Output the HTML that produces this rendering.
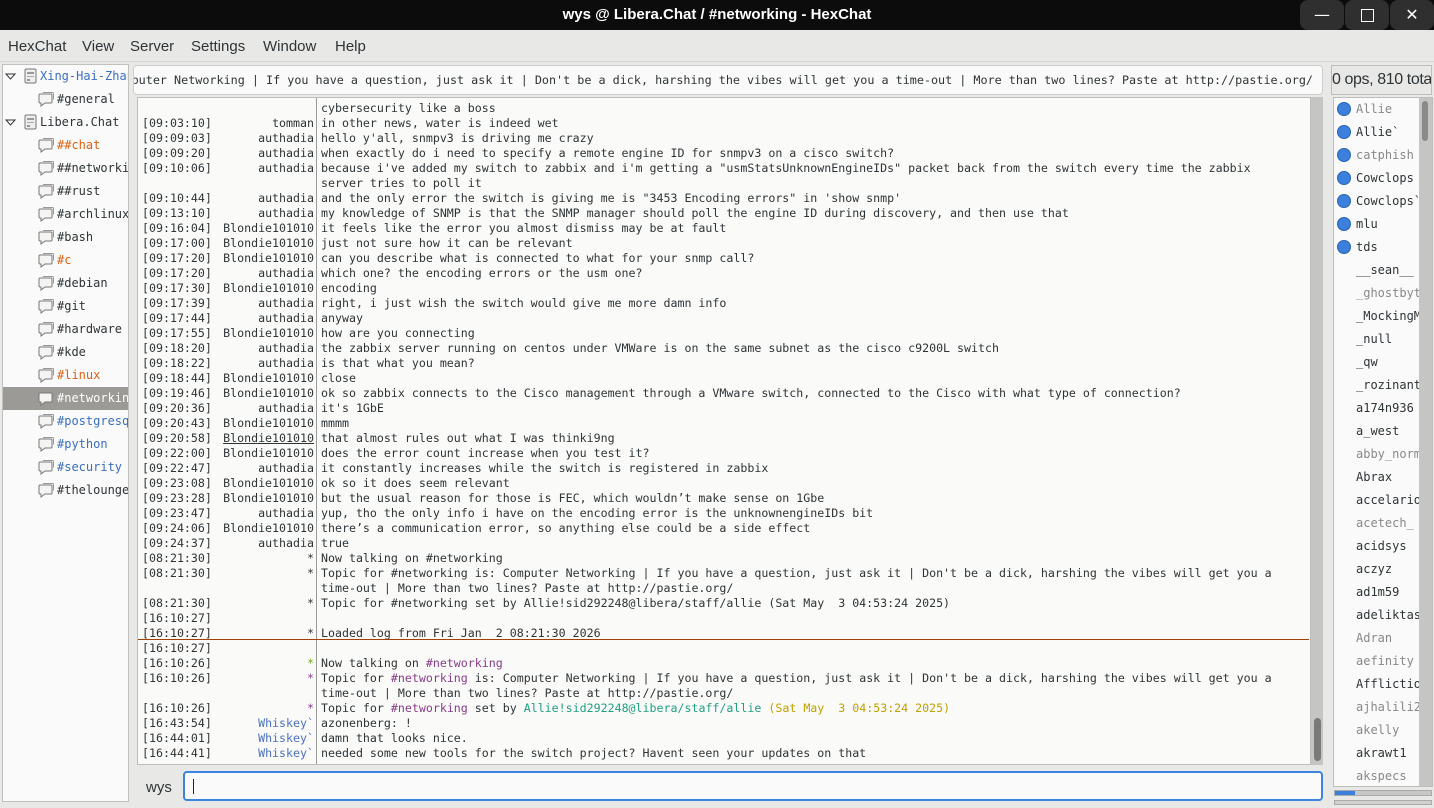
<!DOCTYPE html>
<html><head><meta charset="utf-8">
<style>
*{box-sizing:border-box;margin:0;padding:0}
body{width:1434px;height:808px;overflow:hidden;background:#e8e8e7;font-family:"DejaVu Sans","Liberation Sans",sans-serif;color:#2e3436;position:relative}
.abs{position:absolute}
#title{left:0;top:0;width:1434px;height:30px;background:#0c0c0c;color:#fff;font-weight:bold;font-size:15px;text-align:center;line-height:30px;font-family:"Liberation Sans",sans-serif}
.wb{top:0;width:44px;height:30px;background:#2f2f2f;border-radius:8px;color:#fff;text-align:center;line-height:30px;font-size:16px}
#menu{left:0;top:30px;width:1434px;height:32px;background:#e8e8e7;font-size:15px;border-bottom:1px solid #d6d6d4;font-family:"Liberation Sans",sans-serif}
#menu span{position:absolute;top:8px;line-height:18px}
.mono{font-family:"DejaVu Sans Mono","Liberation Mono",monospace}
#tree{left:2px;top:64px;width:127px;height:738px;background:#fafafa;border:1px solid #c0c0bd;overflow:hidden;font-size:12px}
.ti{position:absolute;height:23px;line-height:23px;white-space:nowrap;left:0;width:127px}
.ti svg{position:absolute}
#topic{left:133px;top:65px;width:1190px;height:30px;background:#fafafa;border:1px solid #cfcfcd;border-radius:4px;font-size:11.75px;line-height:28px;white-space:nowrap;overflow:hidden}
#topic span{position:absolute;right:9px;top:0}
#chat{left:137px;top:97px;width:1174px;height:668px;background:#fafaf9;border:1px solid #bdbdbb;overflow:hidden}
#sep{left:316px;top:98px;width:1px;height:666px;background:#9a9a98}
#lines{left:142px;top:101px;font-size:11.62px;color:#2e3436}
.r{height:15px;line-height:15px;white-space:pre;position:relative;width:1160px}
.t{position:absolute;left:0}
.n{position:absolute;left:0;width:172px;text-align:right}
.m{position:absolute;left:179px}
.g{color:#888}
#vs{left:1311px;top:97px;width:12px;height:668px;background:#c5c5c3}
#vth{left:1314px;top:718px;width:7px;height:43px;background:#7a7a78;border-radius:4px}
#red{left:138px;top:639px;width:1171px;height:1px;background:#a0400a;z-index:2}
#inp{left:183px;top:771px;width:1140px;height:30px;background:#fafafa;border:2px solid #3c84e0;border-radius:4px}
#hdr{left:1331px;top:65px;width:101px;height:30px;border:1px solid #bdbdbb;background:#e8e8e7;font-size:16px;line-height:28px;white-space:nowrap;overflow:hidden;font-family:"Liberation Sans",sans-serif;letter-spacing:-0.4px}
#ul{left:1333px;top:97px;width:100px;height:690px;background:#fafafa;border:1px solid #bdbdbb;overflow:hidden;font-size:12px}
.u{position:absolute;left:22px;height:23px;line-height:23px;white-space:nowrap}
.dot{position:absolute;left:3px;width:14px;height:14px;border-radius:50%;background:#3b80dd;border:1px solid #2a64b5}
#uvs{left:1419px;top:98px;width:13px;height:688px;background:#c5c5c3}
</style></head><body>
<div id="title" class="abs">wys @ Libera.Chat / #networking - HexChat</div>
<div class="abs wb" style="left:1300px">&#8212;</div>
<div class="abs wb" style="left:1345px"><div style="width:13px;height:13px;border:1.5px solid #fff;margin:9px auto 0"></div></div>
<div class="abs wb" style="left:1390px">&#10005;</div>
<div id="menu" class="abs"><span style="left:8px">HexChat</span><span style="left:82px">View</span><span style="left:130px">Server</span><span style="left:191px">Settings</span><span style="left:263px">Window</span><span style="left:335px">Help</span></div>

<div id="tree" class="abs mono">
<svg width="0" height="0" style="position:absolute"><defs>
<g id="bub"><path d="M3 2h11a1 1 0 0 1 1 1v7a1 1 0 0 1-1 1H8l-4 3v-3H3a1 1 0 0 1-1-1V3a1 1 0 0 1 1-1z" fill="#f4f4f2" stroke="#777" stroke-width="1"/><path d="M6 0.5h9.5a1 1 0 0 1 1 1v6" fill="none" stroke="#999"/></g>
<g id="srv"><rect x="2" y="1" width="11" height="14" rx="1.5" fill="#eee" stroke="#777"/><rect x="4" y="4" width="7" height="2" fill="#999"/><rect x="4" y="8" width="7" height="1" fill="#aaa"/><rect x="4" y="11" width="3" height="2" fill="#999"/></g>
<g id="tri"><path d="M1 3h9l-4.5 5z" fill="#fff" stroke="#333"/></g>
</defs></svg>
<div class="ti" style="top:0"><svg style="left:2px;top:6px" width="12" height="10"><use href="#tri"/></svg><svg style="left:20px;top:3px" width="16" height="17"><use href="#srv"/></svg><span style="position:absolute;left:37px;color:#3a6fc4">Xing-Hai-Zhan</span></div>
<div class="ti" style="top:23px"><svg style="left:34px;top:4px" width="18" height="16"><use href="#bub"/></svg><span style="position:absolute;left:54px">#general</span></div>
<div class="ti" style="top:46px"><svg style="left:2px;top:6px" width="12" height="10"><use href="#tri"/></svg><svg style="left:20px;top:3px" width="16" height="17"><use href="#srv"/></svg><span style="position:absolute;left:37px">Libera.Chat</span></div>
<div class="ti" style="top:69px"><svg style="left:34px;top:4px" width="18" height="16"><use href="#bub"/></svg><span style="position:absolute;left:54px;color:#e06010">##chat</span></div>
<div class="ti" style="top:92px"><svg style="left:34px;top:4px" width="18" height="16"><use href="#bub"/></svg><span style="position:absolute;left:54px">##networking</span></div>
<div class="ti" style="top:115px"><svg style="left:34px;top:4px" width="18" height="16"><use href="#bub"/></svg><span style="position:absolute;left:54px">##rust</span></div>
<div class="ti" style="top:138px"><svg style="left:34px;top:4px" width="18" height="16"><use href="#bub"/></svg><span style="position:absolute;left:54px">#archlinux</span></div>
<div class="ti" style="top:161px"><svg style="left:34px;top:4px" width="18" height="16"><use href="#bub"/></svg><span style="position:absolute;left:54px">#bash</span></div>
<div class="ti" style="top:184px"><svg style="left:34px;top:4px" width="18" height="16"><use href="#bub"/></svg><span style="position:absolute;left:54px;color:#e06010">#c</span></div>
<div class="ti" style="top:207px"><svg style="left:34px;top:4px" width="18" height="16"><use href="#bub"/></svg><span style="position:absolute;left:54px">#debian</span></div>
<div class="ti" style="top:230px"><svg style="left:34px;top:4px" width="18" height="16"><use href="#bub"/></svg><span style="position:absolute;left:54px">#git</span></div>
<div class="ti" style="top:253px"><svg style="left:34px;top:4px" width="18" height="16"><use href="#bub"/></svg><span style="position:absolute;left:54px">#hardware</span></div>
<div class="ti" style="top:276px"><svg style="left:34px;top:4px" width="18" height="16"><use href="#bub"/></svg><span style="position:absolute;left:54px">#kde</span></div>
<div class="ti" style="top:299px"><svg style="left:34px;top:4px" width="18" height="16"><use href="#bub"/></svg><span style="position:absolute;left:54px;color:#e06010">#linux</span></div>
<div class="ti" style="top:322px;background:#9b9a96"><svg style="left:34px;top:4px" width="18" height="16"><use href="#bub"/></svg><span style="position:absolute;left:54px;color:#fff">#networking</span></div>
<div class="ti" style="top:345px"><svg style="left:34px;top:4px" width="18" height="16"><use href="#bub"/></svg><span style="position:absolute;left:54px;color:#3a6fc4">#postgresql</span></div>
<div class="ti" style="top:368px"><svg style="left:34px;top:4px" width="18" height="16"><use href="#bub"/></svg><span style="position:absolute;left:54px;color:#3a6fc4">#python</span></div>
<div class="ti" style="top:391px"><svg style="left:34px;top:4px" width="18" height="16"><use href="#bub"/></svg><span style="position:absolute;left:54px;color:#3a6fc4">#security</span></div>
<div class="ti" style="top:414px"><svg style="left:34px;top:4px" width="18" height="16"><use href="#bub"/></svg><span style="position:absolute;left:54px">#thelounge</span></div>
</div>

<div id="topic" class="abs mono"><span>Computer Networking | If you have a question, just ask it | Don't be a dick, harshing the vibes will get you a time-out | More than two lines? Paste at http://pastie.org/</span></div>

<div id="chat" class="abs"></div>
<div id="sep" class="abs"></div>
<div id="red" class="abs"></div>
<div id="lines" class="abs mono">
<div class="r"><span class="m">cybersecurity like a boss</span></div>
<div class="r"><span class="t">[09:03:10]</span><span class="n">tomman</span><span class="m">in other news, water is indeed wet</span></div>
<div class="r"><span class="t">[09:09:03]</span><span class="n">authadia</span><span class="m">hello y'all, snmpv3 is driving me crazy</span></div>
<div class="r"><span class="t">[09:09:20]</span><span class="n">authadia</span><span class="m">when exactly do i need to specify a remote engine ID for snmpv3 on a cisco switch?</span></div>
<div class="r"><span class="t">[09:10:06]</span><span class="n">authadia</span><span class="m">because i've added my switch to zabbix and i'm getting a "usmStatsUnknownEngineIDs" packet back from the switch every time the zabbix</span></div>
<div class="r"><span class="m">server tries to poll it</span></div>
<div class="r"><span class="t">[09:10:44]</span><span class="n">authadia</span><span class="m">and the only error the switch is giving me is "3453 Encoding errors" in 'show snmp'</span></div>
<div class="r"><span class="t">[09:13:10]</span><span class="n">authadia</span><span class="m">my knowledge of SNMP is that the SNMP manager should poll the engine ID during discovery, and then use that</span></div>
<div class="r"><span class="t">[09:16:04]</span><span class="n">Blondie101010</span><span class="m">it feels like the error you almost dismiss may be at fault</span></div>
<div class="r"><span class="t">[09:17:00]</span><span class="n">Blondie101010</span><span class="m">just not sure how it can be relevant</span></div>
<div class="r"><span class="t">[09:17:20]</span><span class="n">Blondie101010</span><span class="m">can you describe what is connected to what for your snmp call?</span></div>
<div class="r"><span class="t">[09:17:20]</span><span class="n">authadia</span><span class="m">which one? the encoding errors or the usm one?</span></div>
<div class="r"><span class="t">[09:17:30]</span><span class="n">Blondie101010</span><span class="m">encoding</span></div>
<div class="r"><span class="t">[09:17:39]</span><span class="n">authadia</span><span class="m">right, i just wish the switch would give me more damn info</span></div>
<div class="r"><span class="t">[09:17:44]</span><span class="n">authadia</span><span class="m">anyway</span></div>
<div class="r"><span class="t">[09:17:55]</span><span class="n">Blondie101010</span><span class="m">how are you connecting</span></div>
<div class="r"><span class="t">[09:18:20]</span><span class="n">authadia</span><span class="m">the zabbix server running on centos under VMWare is on the same subnet as the cisco c9200L switch</span></div>
<div class="r"><span class="t">[09:18:22]</span><span class="n">authadia</span><span class="m">is that what you mean?</span></div>
<div class="r"><span class="t">[09:18:44]</span><span class="n">Blondie101010</span><span class="m">close</span></div>
<div class="r"><span class="t">[09:19:46]</span><span class="n">Blondie101010</span><span class="m">ok so zabbix connects to the Cisco management through a VMware switch, connected to the Cisco with what type of connection?</span></div>
<div class="r"><span class="t">[09:20:36]</span><span class="n">authadia</span><span class="m">it's 1GbE</span></div>
<div class="r"><span class="t">[09:20:43]</span><span class="n">Blondie101010</span><span class="m">mmmm</span></div>
<div class="r"><span class="t">[09:20:58]</span><span class="n"><u>Blondie101010</u></span><span class="m">that almost rules out what I was thinki9ng</span></div>
<div class="r"><span class="t">[09:22:00]</span><span class="n">Blondie101010</span><span class="m">does the error count increase when you test it?</span></div>
<div class="r"><span class="t">[09:22:47]</span><span class="n">authadia</span><span class="m">it constantly increases while the switch is registered in zabbix</span></div>
<div class="r"><span class="t">[09:23:08]</span><span class="n">Blondie101010</span><span class="m">ok so it does seem relevant</span></div>
<div class="r"><span class="t">[09:23:28]</span><span class="n">Blondie101010</span><span class="m">but the usual reason for those is FEC, which wouldn’t make sense on 1Gbe</span></div>
<div class="r"><span class="t">[09:23:47]</span><span class="n">authadia</span><span class="m">yup, tho the only info i have on the encoding error is the unknownengineIDs bit</span></div>
<div class="r"><span class="t">[09:24:06]</span><span class="n">Blondie101010</span><span class="m">there’s a communication error, so anything else could be a side effect</span></div>
<div class="r"><span class="t">[09:24:37]</span><span class="n">authadia</span><span class="m">true</span></div>
<div class="r"><span class="t">[08:21:30]</span><span class="n">*</span><span class="m">Now talking on #networking</span></div>
<div class="r"><span class="t">[08:21:30]</span><span class="n">*</span><span class="m">Topic for #networking is: Computer Networking | If you have a question, just ask it | Don't be a dick, harshing the vibes will get you a</span></div>
<div class="r"><span class="m">time-out | More than two lines? Paste at http://pastie.org/</span></div>
<div class="r"><span class="t">[08:21:30]</span><span class="n">*</span><span class="m">Topic for #networking set by Allie!sid292248@libera/staff/allie (Sat May  3 04:53:24 2025)</span></div>
<div class="r"><span class="t">[16:10:27]</span></div>
<div class="r"><span class="t">[16:10:27]</span><span class="n">*</span><span class="m">Loaded log from Fri Jan  2 08:21:30 2026</span></div>
<div class="r"><span class="t">[16:10:27]</span></div>
<div class="r"><span class="t">[16:10:26]</span><span class="n" style="color:#73a820">*</span><span class="m">Now talking on <span style="color:#8a3c8a">#networking</span></span></div>
<div class="r"><span class="t">[16:10:26]</span><span class="n" style="color:#8a3c8a">*</span><span class="m">Topic for <span style="color:#8a3c8a">#networking</span> is: Computer Networking | If you have a question, just ask it | Don't be a dick, harshing the vibes will get you a</span></div>
<div class="r"><span class="m">time-out | More than two lines? Paste at http://pastie.org/</span></div>
<div class="r"><span class="t">[16:10:26]</span><span class="n" style="color:#8a3c8a">*</span><span class="m">Topic for <span style="color:#8a3c8a">#networking</span> set by <span style="color:#20a080">Allie!sid292248@libera/staff/allie</span> <span style="color:#c4a000">(Sat May  3 04:53:24 2025)</span></span></div>
<div class="r"><span class="t">[16:43:54]</span><span class="n" style="color:#4a72c4">Whiskey`</span><span class="m">azonenberg: !</span></div>
<div class="r"><span class="t">[16:44:01]</span><span class="n" style="color:#4a72c4">Whiskey`</span><span class="m">damn that looks nice.</span></div>
<div class="r"><span class="t">[16:44:41]</span><span class="n" style="color:#4a72c4">Whiskey`</span><span class="m">needed some new tools for the switch project? Havent seen your updates on that</span></div>
</div>
<div id="vs" class="abs"></div>
<div id="vth" class="abs"></div>

<div class="abs" style="left:146px;top:776px;font-size:15px;line-height:24px;font-family:'Liberation Sans',sans-serif">wys</div>
<div id="inp" class="abs"><div style="position:absolute;left:8px;top:6px;width:1px;height:15px;background:#222"></div></div>

<div id="hdr" class="abs">0 ops, 810 total</div>
<div id="ul" class="abs mono">
<div class="dot" style="top:4px"></div><div class="u g" style="top:0">Allie</div>
<div class="dot" style="top:27px"></div><div class="u" style="top:23px">Allie`</div>
<div class="dot" style="top:50px"></div><div class="u g" style="top:46px">catphish</div>
<div class="dot" style="top:73px"></div><div class="u" style="top:69px">Cowclops</div>
<div class="dot" style="top:96px"></div><div class="u" style="top:92px">Cowclops`</div>
<div class="dot" style="top:119px"></div><div class="u" style="top:115px">mlu</div>
<div class="dot" style="top:142px"></div><div class="u" style="top:138px">tds</div>
<div class="u" style="top:161px">__sean__</div>
<div class="u g" style="top:184px">_ghostbyte</div>
<div class="u" style="top:207px">_MockingMe</div>
<div class="u" style="top:230px">_null</div>
<div class="u" style="top:253px">_qw</div>
<div class="u" style="top:276px">_rozinante</div>
<div class="u" style="top:299px">a174n936</div>
<div class="u" style="top:322px">a_west</div>
<div class="u g" style="top:345px">abby_norm</div>
<div class="u" style="top:368px">Abrax</div>
<div class="u" style="top:391px">accelario</div>
<div class="u g" style="top:414px">acetech_</div>
<div class="u" style="top:437px">acidsys</div>
<div class="u" style="top:460px">aczyz</div>
<div class="u" style="top:483px">ad1m59</div>
<div class="u" style="top:506px">adeliktas</div>
<div class="u g" style="top:529px">Adran</div>
<div class="u g" style="top:552px">aefinity</div>
<div class="u" style="top:575px">Afflictio</div>
<div class="u g" style="top:598px">ajhalili2</div>
<div class="u g" style="top:621px">akelly</div>
<div class="u" style="top:644px">akrawt1</div>
<div class="u g" style="top:667px">akspecs</div>
</div>
<div id="uvs" class="abs"><div style="position:absolute;left:3px;top:3px;width:6px;height:40px;background:#8a8a88;border-radius:3px"></div></div>
<div class="abs" style="left:1334px;top:790px;width:98px;height:6px;background:#c8c8c6;border:1px solid #aaa"><div style="width:20px;height:4px;background:#3b80dd"></div></div>
<div class="abs" style="left:1334px;top:800px;width:98px;height:5px;background:#d0d0ce;border:1px solid #aaa"></div>
</body></html>
